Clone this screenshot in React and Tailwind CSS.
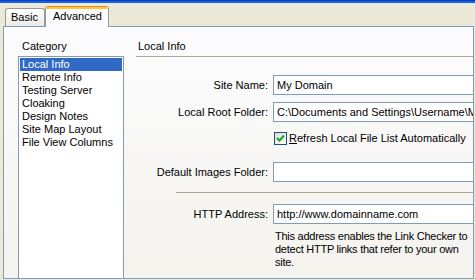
import React from "react";

const categories = [
  "Local Info",
  "Remote Info",
  "Testing Server",
  "Cloaking",
  "Design Notes",
  "Site Map Layout",
  "File View Columns",
];

function Field({ label, value, mt }) {
  return (
    <div className={`flex items-center ${mt}`}>
      <div className="w-[132px] shrink-0 text-right leading-[13px]">{label}</div>
      <div className="ml-[5px] w-[230px] shrink-0 h-[20px] border border-[#7F9DB9] bg-white flex items-center pl-[3px] leading-[13px] whitespace-nowrap overflow-hidden">
        {value}
      </div>
    </div>
  );
}

export default function App() {
  return (
    <div className="w-[475px] h-[280px] bg-[#ECE9D8] overflow-hidden text-[11px] text-black font-['Liberation_Sans',Arial,sans-serif]">
      <div className="h-[1px] bg-[#0A3BB8]" />
      <div className="h-[2px] bg-[#1660E8]" />
      {/* tabs */}
      <div className="flex items-end h-[23px] pl-[5px]">
        <div className="h-[18px] w-[40px] border border-b-0 border-[#919B9C] rounded-t-[3px] bg-gradient-to-b from-white to-[#ECEBE6] pl-[5px] pt-[2px] leading-[13px]">
          Basic
        </div>
        <div className="relative z-10 -mb-[1px] h-[21px] w-[64px] border-x border-[#919B9C] rounded-t-[3px] bg-[#FCFCFE] overflow-hidden">
          <div className="h-[1px] bg-[#E68B2C]" />
          <div className="h-[2px] bg-[#FFC73C]" />
          <div className="pl-[7px] pt-[1px] leading-[13px]">Advanced</div>
        </div>
      </div>
      {/* panel */}
      <div className="ml-[3px] w-[471px] h-[253px] border border-[#7F9DB9] bg-gradient-to-b from-[#FCFCFE] to-[#F4F3EE] overflow-hidden flex">
        {/* left column */}
        <div className="ml-[14px] w-[106px] shrink-0 flex flex-col">
          <div className="pt-[13px] pl-[4px] leading-[13px]">Category</div>
          <div className="mt-[3px] flex-1 border border-[#7F9DB9] border-b-0 bg-white p-[1px]">
            {categories.map((c, i) => (
              <div
                key={c}
                className={`h-[13px] leading-[13px] pl-[2px] whitespace-nowrap ${
                  i === 0 ? "bg-[#316AC5] text-white" : ""
                }`}
              >
                {c}
              </div>
            ))}
          </div>
        </div>
        {/* right column */}
        <div className="ml-[12px] flex-1 min-w-0 flex flex-col">
          <div className="pt-[13px] pl-[2px] leading-[13px]">Local Info</div>
          <div className="mt-[3px] h-[1px] bg-[#ACA899]" />
          <Field label="Site Name:" value="My Domain" mt="mt-[18px]" />
          <Field
            label="Local Root Folder:"
            value="C:\Documents and Settings\Username\My Documents"
            mt="mt-[7px]"
          />
          <div className="mt-[10px] ml-[138px] flex items-center">
            <div className="w-[13px] h-[13px] shrink-0 border border-[#1C5180] bg-gradient-to-br from-[#DCDCD7] to-white flex items-center justify-center">
              <svg width="9" height="9" viewBox="0 0 9 9">
                <path d="M1 4 L3.5 6.5 L8 1.5" stroke="#21A121" strokeWidth="2" fill="none" />
              </svg>
            </div>
            <div className="ml-[2px] leading-[13px] whitespace-nowrap">
              <span className="underline">R</span>efresh Local File List Automatically
            </div>
          </div>
          <Field label="Default Images Folder:" value="" mt="mt-[17px]" />
          <div className="mt-[10px] ml-[40px] h-[1px] bg-[#ACA899]" />
          <Field label="HTTP Address:" value="http://www.domainname.com" mt="mt-[11px]" />
          <div className="mt-[6px] ml-[139px] leading-[13px] whitespace-nowrap tracking-[-0.25px]">
            This address enables the Link Checker to
            <br />
            detect HTTP links that refer to your own
            <br />
            site.
          </div>
        </div>
      </div>
    </div>
  );
}
